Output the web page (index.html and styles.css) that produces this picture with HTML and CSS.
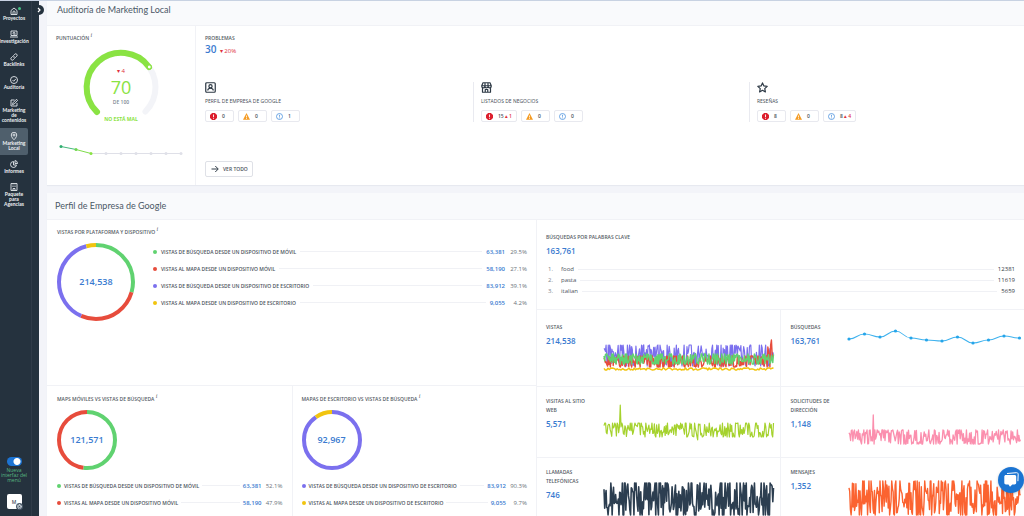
FILE: index.html
```html
<!DOCTYPE html>
<html lang="es">
<head>
<meta charset="utf-8">
<title>Marketing Local</title>
<link rel="stylesheet" href="styles.css">
</head>
<body>
<div class="shell">
  <aside class="sidebar">
    <nav class="nav">
      <a class="nav-item" href="#"><svg class="nav-icon" viewBox="0 0 16 16"><path d="M2 7l6-5 6 5v8H2zM6 15v-5a2 2 0 0 1 4 0v5"/></svg><span class="nav-dot"></span>Proyectos</a>
      <a class="nav-item" href="#"><svg class="nav-icon" viewBox="0 0 16 16"><path d="M2 2h12v9H2zM0 14h16M9.500 8.500l2 2"/><circle cx="8" cy="6.500" r="2"/></svg>Investigación</a>
      <a class="nav-item" href="#"><svg class="nav-icon" viewBox="0 0 16 16"><path d="M7 5l2.500-2.500a2.800 2.800 0 0 1 4 4L11 9a2.800 2.800 0 0 1-4 0M9 11l-2.500 2.500a2.800 2.800 0 0 1-4-4L5 7a2.800 2.800 0 0 1 4 0"/></svg>Backlinks</a>
      <a class="nav-item" href="#"><svg class="nav-icon" viewBox="0 0 16 16"><circle cx="8" cy="8" r="7"/><path d="M5 8l2.500 2.500L11.500 6"/></svg>Auditoría</a>
      <a class="nav-item" href="#"><svg class="nav-icon" viewBox="0 0 16 16"><path d="M9 2H2v12h12V8M5 11l1-3.500 7-7L15 3 8.500 10z"/></svg>Marketing<br>de<br>contenidos</a>
      <a class="nav-item nav-item-active" href="#"><svg class="nav-icon" viewBox="0 0 16 16"><path d="M8 15.500S2.500 10.500 2.500 6a5.500 5.500 0 0 1 11 0C13.500 10.500 8 15.500 8 15.500z"/><circle cx="8" cy="6" r="2"/></svg>Marketing<br>Local</a>
      <a class="nav-item" href="#"><svg class="nav-icon" viewBox="0 0 16 16"><path d="M7 3a6 6 0 1 0 6 7H7zM10 1v6h5a6 6 0 0 0-5-6z"/></svg>Informes</a>
      <a class="nav-item" href="#"><svg class="nav-icon" viewBox="0 0 16 16"><path d="M2 1h12v14H2zM5 4h2M9 4h2M5 7h2M9 7h2M6 15v-4h4v4"/></svg>Paquete<br>para<br>Agencias</a>
    </nav>
    <div class="sidebar-foot">
      <label class="switch-label"><input class="switch" type="checkbox" role="switch" checked><span>Nueva interfaz del menú</span></label>
      <button class="avatar" type="button">M
        <svg class="avatar-gear" viewBox="0 0 16 16"><circle cx="8" cy="8" r="8" fill="#4b5a69"/><circle cx="8" cy="8" r="4.200" fill="none" stroke="#dfe5ea" stroke-width="2.500" stroke-dasharray="2.200 1.100"/><circle cx="8" cy="8" r="2.500" fill="none" stroke="#dfe5ea" stroke-width="1.500"/></svg>
      </button>
    </div>
    <button class="collapse" type="button" aria-label="Abrir menú"><svg viewBox="0 0 10 10"><path d="M4 3L6 5 4 7" fill="none" stroke="#fff" stroke-width="1.200"/></svg></button>
  </aside>

  <main class="main">
    <section class="card">
      <header class="card-head card-head-first"><h2 class="card-title">Auditoría de Marketing Local</h2></header>
      <div class="audit">
        <div class="score">
          <h3 class="label">PUNTUACIÓN <sup class="info">i</sup></h3>
          <div class="gauge">
            <svg class="gauge-svg" viewBox="0 0 80 76">
              <path d="M15.500 64.500A34.500 34.500 0 1 1 64.500 64.500" fill="none" stroke="#f3f4f8" stroke-width="6" stroke-linecap="round"/>
              <path d="M16 65A34.500 34.500 0 1 1 68 20" fill="none" stroke="#8ae343" stroke-width="6" stroke-linecap="round"/>
              <circle cx="68.300" cy="20" r="2" fill="#fff" stroke="#8ae343" stroke-width="1.200"/>
            </svg>
            <div class="gauge-text">
              <span class="delta delta-lg">▾ 4</span>
              <strong class="gauge-num">70</strong>
              <span class="gauge-of">DE 100</span>
              <span class="gauge-state">NO ESTÁ MAL</span>
            </div>
          </div>
          <svg class="trend" viewBox="0 0 128 14">
            <path d="M35 10.500H125" stroke="#dfe0e8" fill="none"/>
            <path d="M5 3.500L20 6.500" stroke="#45b87c" fill="none"/><path d="M20 6.500L35 10.500" stroke="#7fdc4b" fill="none"/>
            <g fill="#dfe0e8"><circle cx="50" cy="10.500" r="1.500"/><circle cx="65" cy="10.500" r="1.500"/><circle cx="80" cy="10.500" r="1.500"/><circle cx="95" cy="10.500" r="1.500"/><circle cx="110" cy="10.500" r="1.500"/><circle cx="125" cy="10.500" r="1.500"/></g>
            <circle cx="5" cy="3.500" r="1.500" fill="#2fae70"/><circle cx="20" cy="6.500" r="1.500" fill="#6fd650"/><circle cx="35" cy="10.500" r="1.500" fill="#8ae343"/>
          </svg>
        </div>
        <div class="issues">
          <h3 class="label">PROBLEMAS</h3>
          <p class="issues-total"><a class="num num-lg" href="#">30</a> <span class="delta delta-lg">▾ 20%</span></p>
          <div class="areas">
            <div class="area">
              <svg class="area-icon" viewBox="0 0 22 22"><rect x="1.500" y="1.500" width="19" height="19" rx="2"/><circle cx="11" cy="8.500" r="3.200"/><path d="M5.500 17c0-3 2.500-4.500 5.500-4.500s5.500 1.500 5.500 4.500"/></svg>
              <h4 class="label label-area">PERFIL DE EMPRESA DE GOOGLE</h4>
              <div class="chips">
                <button class="chip" type="button"><svg viewBox="0 0 14 14"><path d="M4.200 0h5.600L14 4.200v5.600L9.800 14H4.200L0 9.800V4.200z" fill="#dc1f2e"/><path d="M7 3v5M7 9.500v2" stroke="#fff" stroke-width="1.800"/></svg>0</button>
                <button class="chip" type="button"><svg viewBox="0 0 14 14"><path d="M7 0l7 13.500H0z" fill="#f59b23"/><path d="M7 5v4M7 10.200v1.800" stroke="#fff" stroke-width="1.600"/></svg>0</button>
                <button class="chip" type="button"><svg viewBox="0 0 14 14"><circle cx="7" cy="7" r="6" fill="none" stroke="#4b92dd" stroke-width="1.600"/><path d="M7 3.500v4M7 9v1.800" stroke="#4b92dd" stroke-width="1.600"/></svg>1</button>
              </div>
            </div>
            <div class="area area-ruled">
              <svg class="area-icon" viewBox="0 0 22 22"><path d="M4 1.500h14l2.500 6H1.500zM1.500 7.500v1a3.100 3.100 0 0 0 6.300 0 3.100 3.100 0 0 0 6.400 0 3.100 3.100 0 0 0 6.300 0v-1M3 11v9.500h16V11M8.500 20v-5h5v5M8 2v6M14 2v6"/></svg>
              <h4 class="label label-area">LISTADOS DE NEGOCIOS</h4>
              <div class="chips">
                <button class="chip" type="button"><svg viewBox="0 0 14 14"><path d="M4.200 0h5.600L14 4.200v5.600L9.800 14H4.200L0 9.800V4.200z" fill="#dc1f2e"/><path d="M7 3v5M7 9.500v2" stroke="#fff" stroke-width="1.800"/></svg>15 <span class="delta">▴ 1</span></button>
                <button class="chip" type="button"><svg viewBox="0 0 14 14"><path d="M7 0l7 13.500H0z" fill="#f59b23"/><path d="M7 5v4M7 10.200v1.800" stroke="#fff" stroke-width="1.600"/></svg>0</button>
                <button class="chip" type="button"><svg viewBox="0 0 14 14"><circle cx="7" cy="7" r="6" fill="none" stroke="#4b92dd" stroke-width="1.600"/><path d="M7 3.500v4M7 9v1.800" stroke="#4b92dd" stroke-width="1.600"/></svg>0</button>
              </div>
            </div>
            <div class="area area-ruled">
              <svg class="area-icon" viewBox="0 0 22 22"><path d="M11 1.800l2.800 6.100 6.600.8-4.900 4.500 1.300 6.600L11 16.500l-5.800 3.300 1.300-6.600L1.600 8.700l6.600-.8z"/></svg>
              <h4 class="label label-area">RESEÑAS</h4>
              <div class="chips">
                <button class="chip" type="button"><svg viewBox="0 0 14 14"><path d="M4.200 0h5.600L14 4.200v5.600L9.800 14H4.200L0 9.800V4.200z" fill="#dc1f2e"/><path d="M7 3v5M7 9.500v2" stroke="#fff" stroke-width="1.800"/></svg>8</button>
                <button class="chip" type="button"><svg viewBox="0 0 14 14"><path d="M7 0l7 13.500H0z" fill="#f59b23"/><path d="M7 5v4M7 10.200v1.800" stroke="#fff" stroke-width="1.600"/></svg>0</button>
                <button class="chip" type="button"><svg viewBox="0 0 14 14"><circle cx="7" cy="7" r="6" fill="none" stroke="#4b92dd" stroke-width="1.600"/><path d="M7 3.500v4M7 9v1.800" stroke="#4b92dd" stroke-width="1.600"/></svg>8 <span class="delta">▴ 4</span></button>
              </div>
            </div>
          </div>
          <button class="view-all" type="button"><svg viewBox="0 0 16 16"><path d="M1 8h13M8.500 2L14.500 8l-6 6" fill="none" stroke="#333f4a" stroke-width="2"/></svg>VER TODO</button>
        </div>
      </div>
    </section>

    <section class="card">
      <header class="card-head"><h2 class="card-title">Perfil de Empresa de Google</h2></header>
      <div class="profile">
        <div class="views">
          <div class="platform">
            <h3 class="label">VISTAS POR PLATAFORMA Y DISPOSITIVO <sup class="info">i</sup></h3>
            <div class="platform-body">
              <div class="donut donut-lg">
                <svg viewBox="0 0 78 78"><g class="arcs">
                  <circle class="arc green" cx="39" cy="39" r="37" pathLength="100" stroke-dasharray="29.5 70.5"/>
                  <circle class="arc red" cx="39" cy="39" r="37" pathLength="100" stroke-dasharray="27.1 72.9" stroke-dashoffset="-29.5"/>
                  <circle class="arc purple" cx="39" cy="39" r="37" pathLength="100" stroke-dasharray="39.2 60.8" stroke-dashoffset="-56.6"/>
                  <circle class="arc yellow" cx="39" cy="39" r="37" pathLength="100" stroke-dasharray="4.2 95.8" stroke-dashoffset="-95.8"/>
                </g></svg>
                <strong class="num donut-num">214,538</strong>
              </div>
              <ul class="legend">
                <li class="legend-row"><i class="dot green"></i><span>VISTAS DE BÚSQUEDA DESDE UN DISPOSITIVO DE MÓVIL</span><i class="leader"></i><a class="legend-val" href="#">63,381</a><span class="legend-pct">29.5%</span></li>
                <li class="legend-row"><i class="dot red"></i><span>VISTAS AL MAPA DESDE UN DISPOSITIVO MÓVIL</span><i class="leader"></i><a class="legend-val" href="#">58,190</a><span class="legend-pct">27.1%</span></li>
                <li class="legend-row"><i class="dot purple"></i><span>VISTAS DE BÚSQUEDA DESDE UN DISPOSITIVO DE ESCRITORIO</span><i class="leader"></i><a class="legend-val" href="#">83,912</a><span class="legend-pct">39.1%</span></li>
                <li class="legend-row"><i class="dot yellow"></i><span>VISTAS AL MAPA DESDE UN DISPOSITIVO DE ESCRITORIO</span><i class="leader"></i><a class="legend-val" href="#">9,055</a><span class="legend-pct">4.2%</span></li>
              </ul>
            </div>
          </div>
          <div class="versus">
            <h3 class="label">MAPS MÓVILES VS VISTAS DE BÚSQUEDA <sup class="info">i</sup></h3>
            <div class="donut">
              <svg viewBox="0 0 60 60"><g class="arcs arcs-sm">
                <circle class="arc green" cx="30" cy="30" r="28" pathLength="100" stroke-dasharray="52.1 47.9"/>
                <circle class="arc red" cx="30" cy="30" r="28" pathLength="100" stroke-dasharray="47.9 52.1" stroke-dashoffset="-52.1"/>
              </g></svg>
              <strong class="num donut-num">121,571</strong>
            </div>
            <ul class="legend">
              <li class="legend-row"><i class="dot green"></i><span>VISTAS DE BÚSQUEDA DESDE UN DISPOSITIVO DE MÓVIL</span><i class="leader"></i><a class="legend-val" href="#">63,381</a><span class="legend-pct">52.1%</span></li>
              <li class="legend-row"><i class="dot red"></i><span>VISTAS AL MAPA DESDE UN DISPOSITIVO MÓVIL</span><i class="leader"></i><a class="legend-val" href="#">58,190</a><span class="legend-pct">47.9%</span></li>
            </ul>
          </div>
          <div class="versus">
            <h3 class="label">MAPAS DE ESCRITORIO VS VISTAS DE BÚSQUEDA <sup class="info">i</sup></h3>
            <div class="donut">
              <svg viewBox="0 0 60 60"><g class="arcs arcs-sm">
                <circle class="arc purple" cx="30" cy="30" r="28" pathLength="100" stroke-dasharray="90.3 9.7"/>
                <circle class="arc yellow" cx="30" cy="30" r="28" pathLength="100" stroke-dasharray="9.7 90.3" stroke-dashoffset="-90.3"/>
              </g></svg>
              <strong class="num donut-num">92,967</strong>
            </div>
            <ul class="legend">
              <li class="legend-row"><i class="dot purple"></i><span>VISTAS DE BÚSQUEDA DESDE UN DISPOSITIVO DE ESCRITORIO</span><i class="leader"></i><a class="legend-val" href="#">83,912</a><span class="legend-pct">90.3%</span></li>
              <li class="legend-row"><i class="dot yellow"></i><span>VISTAS AL MAPA DESDE UN DISPOSITIVO DE ESCRITORIO</span><i class="leader"></i><a class="legend-val" href="#">9,055</a><span class="legend-pct">9.7%</span></li>
            </ul>
          </div>
        </div>

        <div class="metrics">
          <div class="keywords">
            <h3 class="label">BÚSQUEDAS POR PALABRAS CLAVE</h3>
            <a class="num" href="#">163,761</a>
            <ol class="kw-list">
              <li class="kw-row"><span class="kw-idx">1.</span><span>food</span><i class="leader"></i><span class="kw-count">12381</span></li>
              <li class="kw-row"><span class="kw-idx">2.</span><span>pasta</span><i class="leader"></i><span class="kw-count">11619</span></li>
              <li class="kw-row"><span class="kw-idx">3.</span><span>italian</span><i class="leader"></i><span class="kw-count">5659</span></li>
            </ol>
          </div>
          <div class="metric metric-tall"><div class="metric-text"><h3 class="label">VISTAS</h3><a class="num" href="#">214,538</a></div><svg class="spark" id="vistas" viewBox="0 0 171 50" preserveAspectRatio="none"></svg></div>
          <div class="metric metric-tall"><div class="metric-text"><h3 class="label">BÚSQUEDAS</h3><a class="num" href="#">163,761</a></div><svg class="spark" id="busquedas" viewBox="0 0 171 50" preserveAspectRatio="none"></svg></div>
          <div class="metric"><div class="metric-text"><h3 class="label">VISITAS AL SITIO WEB</h3><a class="num" href="#">5,571</a></div><svg class="spark" id="web" viewBox="0 0 171 50" preserveAspectRatio="none"></svg></div>
          <div class="metric"><div class="metric-text"><h3 class="label">SOLICITUDES DE DIRECCIÓN</h3><a class="num" href="#">1,148</a></div><svg class="spark" id="direccion" viewBox="0 0 171 50" preserveAspectRatio="none"></svg></div>
          <div class="metric"><div class="metric-text"><h3 class="label">LLAMADAS TELEFÓNICAS</h3><a class="num" href="#">746</a></div><svg class="spark" id="llamadas" viewBox="0 0 171 50" preserveAspectRatio="none"></svg></div>
          <div class="metric"><div class="metric-text"><h3 class="label">MENSAJES</h3><a class="num" href="#">1,352</a></div><svg class="spark" id="mensajes" viewBox="0 0 171 50" preserveAspectRatio="none"></svg></div>
        </div>
      </div>
    </section>
  </main>
  <button class="chat" type="button" aria-label="Chat"><svg viewBox="0 0 26 26"><path d="M9 6.500l9.500-.8c1 0 1.700.6 1.700 1.500l-.3 7" fill="none" stroke="#fff" stroke-width="1"/><path d="M8 8h8.500c1 0 1.700.7 1.700 1.600v6.200c0 1-.7 1.600-1.700 1.600h-2.200L12 19.700l-1.500-2.300H8c-1 0-1.700-.6-1.700-1.600V9.600C6.300 8.700 7 8 8 8z" fill="#fff"/></svg></button>
</div>
<script src="charts.js"></script>
</body>
</html>
```

FILE: styles.css
```css
* { box-sizing: border-box; }
body { margin: 0; font-family: "Open Sans", "Noto Sans", sans-serif; font-size: 5px; color: #4c535c; background: #f3f4f9; }
h2, h3, h4, p, ul, ol { margin: 0; padding: 0; font-weight: inherit; font-size: inherit; list-style: none; }
a { text-decoration: none; color: inherit; }
button { font: inherit; color: inherit; cursor: pointer; padding: 0; border: 0; }
svg { display: block; }

.shell { display: grid; grid-template-columns: 39px 1fr; grid-template-rows: minmax(0, 1fr); height: 100vh; overflow: hidden; border-top: 1px solid #c8d2e2; }

.sidebar { position: relative; display: flex; flex-direction: column; justify-content: space-between; background: linear-gradient(90deg, #25323e 31px, #303b48 31px, #303b48 32px, #25323e 32px); }
.nav { display: flex; flex-direction: column; gap: 1px; padding-top: 2px; width: 28px; }
.nav-item { position: relative; display: flex; flex-direction: column; align-items: center; padding: 4px 0; line-height: 5px; font-weight: 700; color: #eef1f4; text-align: center; white-space: nowrap; font-size: 5px; font-family: Lato, sans-serif; }
.nav-item-active { background: #4f5f6c; border-radius: 0 2px 2px 0; }
.nav-icon { width: 8px; height: 8px; margin-bottom: 1px; fill: none; stroke: #e6eaee; stroke-width: 1.8; }
.nav-dot { position: absolute; top: 4px; left: 18px; width: 3px; height: 3px; border-radius: 50%; background: #45c486; }
.sidebar-foot { display: flex; flex-direction: column; align-items: center; gap: 11px; width: 28px; padding-bottom: 7px; }
.switch-label { display: flex; flex-direction: column; align-items: center; gap: 2px; color: #58b982; text-align: center; font-size: 5px; line-height: 5px; }
.switch { appearance: none; margin: 0; width: 15px; height: 9px; border-radius: 5px; background: radial-gradient(circle at 10px 50%, #fff 3px, #1c74d4 4px); }
.avatar { position: relative; width: 15px; height: 15px; border-radius: 2px; background: #fff; font-weight: 600; }
.avatar-gear { position: absolute; right: -1px; bottom: -1px; width: 7px; height: 7px; }
.collapse { position: absolute; top: 4px; left: 34px; width: 10px; height: 10px; border-radius: 50%; background: #25323e; z-index: 2; }

.main { display: flex; flex-direction: column; gap: 8px; padding-left: 8px; min-width: 0; }
.card { flex: none; background: #fff; box-shadow: 0 1px 1px #e7e9f0; }
.card-head { display: flex; align-items: center; height: 27px; padding-left: 8px; background: #f9fafc; border-bottom: 1px solid #f1f2f6; }
.card-head-first { height: 25px; padding: 0 0 7px 10px; }
.card-title { font-family: Lato, sans-serif; font-size: 9px; line-height: 12px; color: #4b5866; }
.label { font-size: 5px; line-height: 9px; font-weight: 600; color: #555c65; }
.label-area { font-weight: 500; color: #444b54; }
.info { font-family: "Liberation Serif", serif; font-style: italic; font-weight: 400; font-size: 6px; line-height: 0; }
.num { display: inline-block; font-size: 8px; line-height: 18px; font-weight: 600; color: #3a7bd0; }
.num-lg { font-size: 10px; }
.delta { color: #e0303c; font-size: 5px; font-weight: 600; }
.delta-lg { font-size: 6px; font-weight: 400; }
.leader { flex: 1; height: 1px; background: #f0f1f5; }

.audit { display: grid; grid-template-columns: 149px 1fr; min-height: 159px; }
.score { border-right: 1px solid #f1f2f6; padding: 8px 9px; }
.gauge { position: relative; width: 80px; margin: 4px 0 0 25px; }
.gauge-svg { width: 80px; height: 76px; }
.gauge-text { position: absolute; inset: 20px 0 0; display: flex; flex-direction: column; align-items: center; line-height: 9px; }
.gauge-num { font-size: 18px; line-height: 22px; font-weight: 500; color: #8ae343; }
.gauge-of { font-size: 5px; color: #7c8792; line-height: 8px; font-weight: 600; }
.gauge-state { font-size: 5px; font-weight: 700; color: #8ae343; margin-top: 9px; line-height: 9px; }
.trend { width: 128px; height: 14px; margin-top: 20px; }
.issues { padding: 8px 0 8px 9px; }
.issues-total { line-height: 12px; }
.issues-total .num { line-height: 12px; }
.issues-total .delta { margin-left: 2px; }
.areas { display: grid; grid-template-columns: 268fr 276fr 275fr; margin: 25px 0 39px; }
.area-ruled { border-left: 1px solid #e9eaf0; padding-left: 7px; }
.area-icon { width: 11px; height: 11px; margin: 0 0 4px; fill: none; stroke: #2c3844; stroke-width: 2.4; stroke-linejoin: round; }
.chips { display: flex; gap: 4px; margin-top: 4px; }
.chip { display: flex; align-items: center; gap: 1px; min-width: 29px; height: 12px; padding: 0 4px; border: 1px solid #e8e9ef; border-radius: 2px; background: #fff; font-weight: 600; }
.chip svg { width: 7px; height: 7px; margin-right: 4px; }
.view-all { display: flex; align-items: center; gap: 4px; height: 16px; padding: 0 4px 0 5px; border: 1px solid #dfe1e7; border-radius: 2px; background: #fff; font-weight: 600; }
.view-all svg { width: 8px; height: 8px; }

.profile { display: grid; grid-template-columns: 490fr 487fr; }
.views { display: grid; grid-template-columns: 1fr 1fr; grid-template-rows: 166px auto; border-right: 1px solid #f1f2f6; }
.platform { grid-column: 1 / -1; padding: 8px 9px 0 10px; border-bottom: 1px solid #f1f2f6; }
.platform-body { display: flex; gap: 18px; margin-top: 6px; }
.donut { display: grid; place-items: center; width: 60px; height: 60px; }
.donut > * { grid-area: 1 / 1; }
.donut svg { width: 100%; }
.donut-num { font-size: 9px; }
.donut-lg { width: 78px; height: 78px; }
.arcs { transform: rotate(-90deg); transform-origin: 39px 39px; }
.arcs-sm { transform-origin: 30px 30px; }
.arc { fill: none; stroke: currentColor; stroke-width: 4; }
.green { color: #60d270; }
.red { color: #e74c3c; }
.purple { color: #7b70ee; }
.yellow { color: #f1c40f; }
.legend { flex: 1; font-size: 5px; font-weight: 600; }
.legend-row { display: flex; align-items: center; gap: 4px; height: 17px; white-space: nowrap; }
.dot { width: 4px; height: 4px; border-radius: 50%; background: currentColor; }
.legend-val { font-size: 6px; color: #3a7bd0; }
.legend-pct { font-size: 6px; min-width: 18px; text-align: right; color: #6c737b; font-weight: 400; }
.versus { padding: 9px 9px 0 10px; }
.versus + .versus { border-left: 1px solid #f1f2f6; padding-left: 9px; }
.versus .donut { margin: 6px 0 7px; }
.versus .legend-row { gap: 3px; }

.metrics { display: grid; grid-template-columns: 1fr 1fr; grid-template-rows: 90px 77px 71px 80px; }
.keywords { grid-column: 1 / -1; padding: 13px 9px 0; border-bottom: 1px solid #f1f2f6; }
.kw-list { margin-top: 4px; font-size: 6px; }
.kw-row { display: flex; align-items: center; gap: 4px; line-height: 11px; }
.kw-idx { width: 11px; padding-left: 2px; color: #7e858d; }
.kw-count { color: #33393f; }
.metric { display: grid; grid-template-columns: 46px 1fr; gap: 12px; padding: 10px 6px 0 9px; border-bottom: 1px solid #f1f2f6; }
.metric:nth-child(even) { border-right: 1px solid #f1f2f6; }
.metric:nth-child(odd) { padding-right: 4px; padding-left: 10px; }
.metric-tall { padding-top: 13px; }
.spark { width: 100%; height: 50px; overflow: visible; }
.chat { position: fixed; right: 0; top: 467px; width: 26px; height: 26px; border-radius: 50%; background: #1b74d2; box-shadow: 0 1px 3px #0003; }
```

FILE: charts.js
```js
(function () {
  var NS = "http://www.w3.org/2000/svg";
  var WIDTH = 171;

  function random(seed) {
    return function () {
      seed = (seed * 1664525 + 1013904223) % 4294967296;
      return seed / 4294967296;
    };
  }

  function add(svg, tag, attrs) {
    var el = document.createElementNS(NS, tag);
    Object.keys(attrs).forEach(function (k) { el.setAttribute(k, attrs[k]); });
    svg.appendChild(el);
  }

  // Daily series: values between top and bottom, plus named peaks [index, y].
  function series(id, color, top, bottom, count, seed, peaks, width) {
    var rnd = random(seed), pts = [], i, y;
    for (i = 0; i < count; i++) {
      y = top + rnd() * (bottom - top) * 1.3 - (bottom - top) * 0.15;
      pts.push(Math.max(top, Math.min(bottom, y)));
    }
    (peaks || []).forEach(function (p) { pts[p[0]] = p[1]; });
    var d = pts.map(function (v, n) {
      return (n ? "L" : "M") + (n * WIDTH / (count - 1)).toFixed(1) + " " + v.toFixed(1);
    }).join("");
    add(document.getElementById(id), "path", { d: d, fill: "none", stroke: color, "stroke-width": width || 1.2, "stroke-linejoin": "round" });
  }

  series("vistas", "#7b70ee", 22, 43, 240, 11);
  series("vistas", "#e74c3c", 33, 44, 240, 23, [[231, 24], [232, 28], [235, 22], [236, 17], [237, 30]], 1.4);
  series("vistas", "#60d270", 31, 41, 240, 37, [], 1.4);
  series("vistas", "#f1c40f", 45, 47, 130, 41, [], 1.5);
  series("web", "#a5d22d", 26, 40, 220, 53, [[20, 30], [21, 8], [22, 30], [121, 43]]);
  series("direccion", "#fb8fae", 33, 47, 220, 67, [[31, 18]], 1.3);
  series("llamadas", "#2c3e50", 15, 47, 250, 71, [], 1.6);
  series("mensajes", "#fb6330", 13, 47, 250, 89, [], 1.4);

  var svg = document.getElementById("busquedas");
  var ys = [16, 11, 14, 8, 15, 17, 18, 14, 20, 17, 13, 15];
  var step = 170 / 11;
  var d = "M0 " + ys[0];
  for (var i = 1; i < ys.length; i++) {
    var mid = (i - 0.5) * step;
    d += "C" + mid + " " + ys[i - 1] + " " + mid + " " + ys[i] + " " + i * step + " " + ys[i];
  }
  add(svg, "path", { d: d, fill: "none", stroke: "#3fb2ee" });
  ys.forEach(function (y, n) { add(svg, "circle", { cx: n * step, cy: y, r: 1.6, fill: "#25a5ea" }); });
})();
```
